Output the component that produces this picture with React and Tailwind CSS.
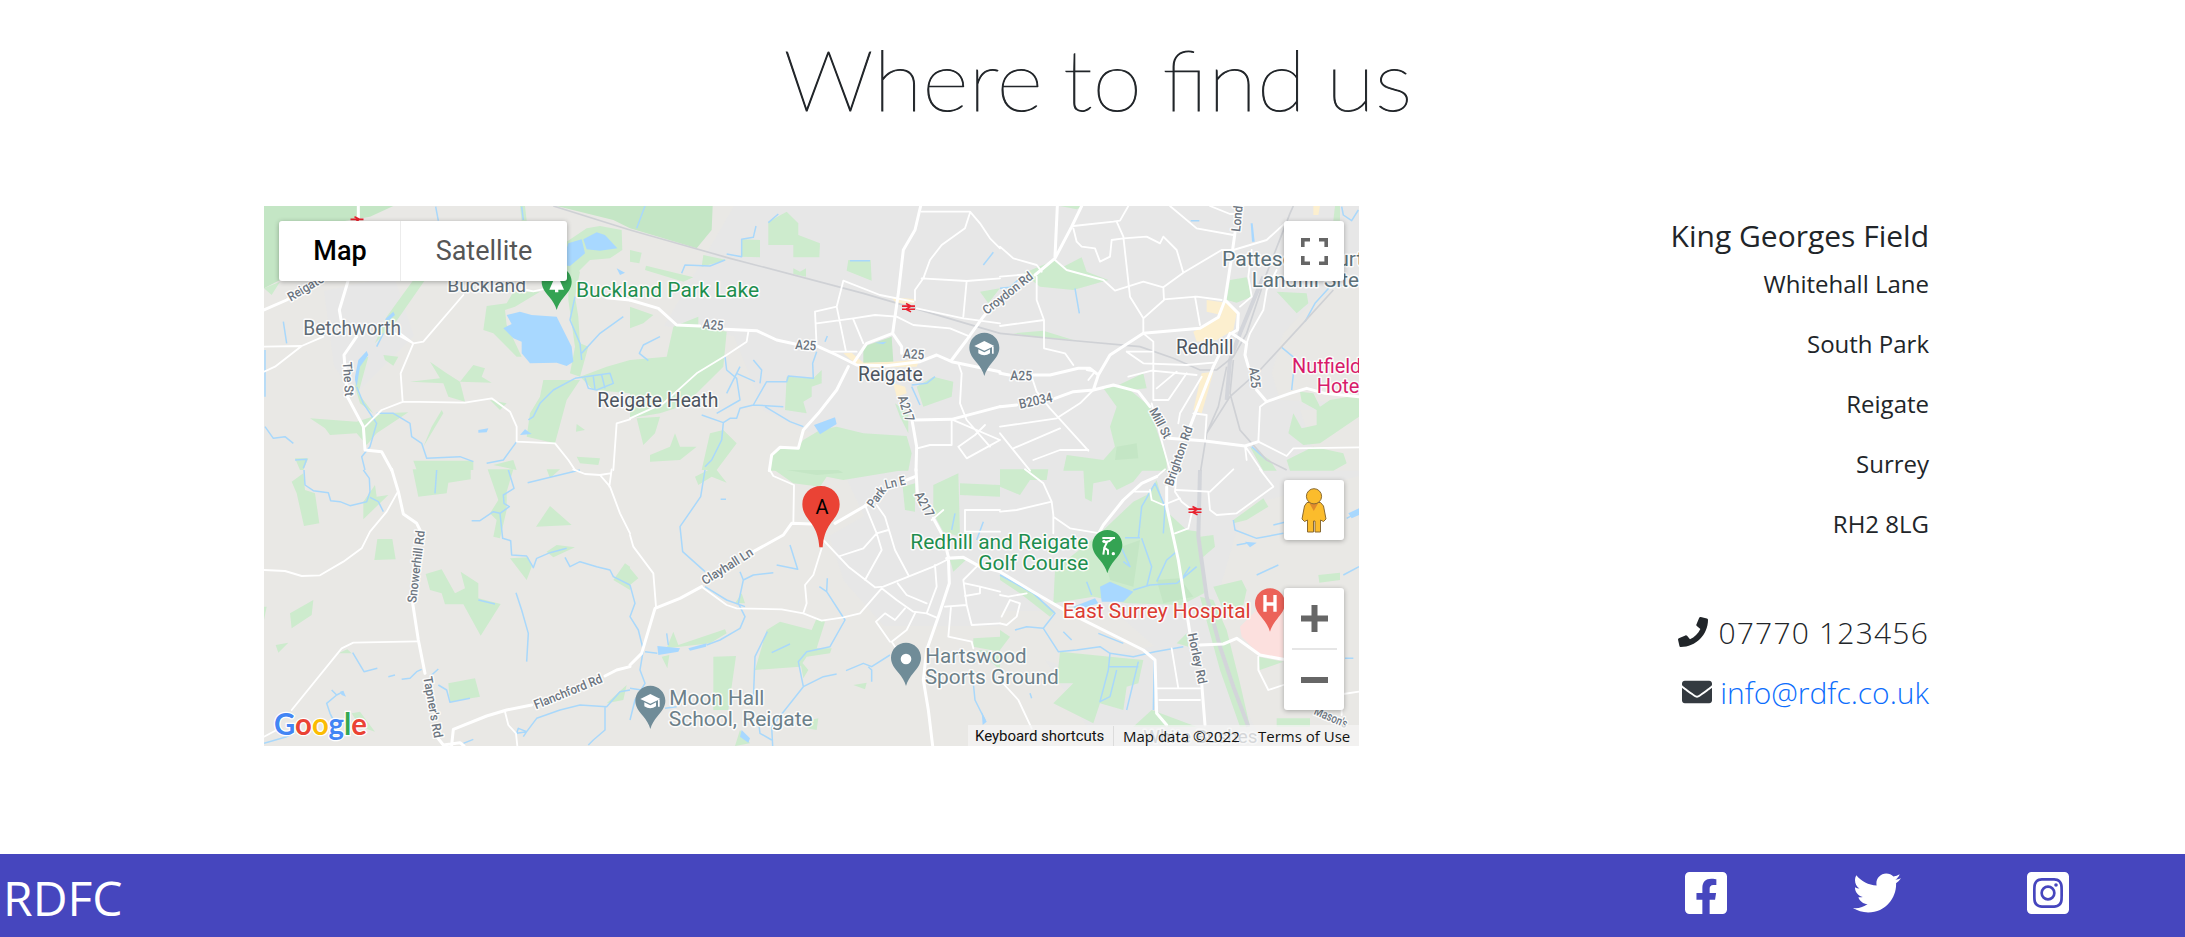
import React from "react";
import { FaFacebookSquare, FaTwitter, FaInstagramSquare, FaPhone, FaEnvelope } from "react-icons/fa";

// The map is described in six tiles; each tile uses its own 3x coordinate space.
const TILES = [
  {
    x: -4, y: -6,
    dark: "M12 18H400L330 50 250 64 60 240 12 265ZM890 18H1110V85L1060 60Z",
    green: "M12 265L60 245 35 285ZM920 125L980 85 1020 78 1085 90 1087 150 1050 175 990 180 930 240 880 240ZM925 200L960 215 945 290 955 350 960 430 985 440 960 530 930 520 945 440 925 300ZM680 318L740 310 760 275 840 275 765 320 735 330 740 375 785 470 770 470 700 400 670 390ZM460 240L495 240 410 362 345 430 380 350ZM370 465L415 470 400 497 375 480ZM510 485L560 520 600 545 640 495 675 505 665 530 695 548 600 545 615 605 565 590 550 550 450 545 540 535ZM850 540L960 540 920 600 885 730 800 710 810 640 840 590ZM960 530L1040 500 1110 480V580L1000 570ZM150 655L290 665 370 640 445 637 350 700 320 735 290 700 210 705 195 685ZM545 630L550 640 490 740 515 680ZM950 672L975 690 948 695ZM950 770L1020 775 1015 795 960 790ZM105 775L145 775 130 810 120 810ZM690 600L740 610 720 630ZM460 782H640V810H470ZM700 795L760 780 770 810ZM300 480L325 470 295 580 340 640 300 610 285 560ZM780 18H795L800 62H785Z",
    water: "M925 130L965 118 975 160 930 198 905 195ZM970 118L1010 97 1035 105 1072 145 1020 152 980 148ZM740 345L780 335 815 345 890 350 935 440 940 485 920 498 890 488 810 490 785 460 785 425 760 415 730 385 755 372ZM780 705L795 688 815 702ZM655 690L685 685 680 697 655 698ZM285 530L295 480 320 453 325 465 300 500 290 560 285 540ZM375 358L400 335 405 345 385 362ZM1070 205L1095 218 1080 225Z",
    stream: "M290 560L310 610 350 670 330 740 305 770 315 810M350 640L400 640 450 670 455 710 485 730 500 775 600 770 640 785M15 680L40 715 75 710 100 730M370 400L350 440M945 290L930 360 960 430 965 480M965 460L1020 400 1090 350M945 535L880 570 840 610 820 650 805 660M70 365L80 430M15 450V590M945 535L1050 520 1060 550 1010 570 985 565 975 535M1000 530L1005 568M1025 525L1035 565M770 725L730 780 680 790M105 780L140 778 130 805M527 20L535 62M785 20L790 60",
    rail: "M880 18L1110 90",
    minor: "M12 440L125 438 190 410M12 515L45 500 125 438M420 400L460 430 490 425 610 285M460 430L422 520 428 605M315 680L365 630 430 605 615 608 695 595 750 635 770 680 770 725 885 730 925 780 945 810M1060 810L1070 670 1110 658M800 270L820 274 860 265M405 400L460 430",
    major: "M12 330L80 300 180 240M265 240L238 330 245 370M290 410L252 465 262 590 310 680 315 750 365 755 395 810M295 18V62M1040 293L1110 300",
  },
  {
    x: 366, y: -6,
    dark: "M0 18H248L245 90 200 145 0 85ZM700 440L785 410 790 485 700 490Z",
    green: "M0 150L35 158 28 190 0 185ZM48 197L190 232 160 245 45 210ZM220 165L290 180 215 200ZM415 65L470 35 505 70 505 105 570 130 568 172 490 172 490 135 415 135ZM335 118L390 120 390 172 335 170ZM655 180H722L725 242 650 212ZM490 205L510 215 528 205 528 230 490 222ZM0 320L70 345 40 370 0 385ZM130 380L205 350 205 380 290 395 280 500 200 580 150 620 90 640 0 655V480L110 470ZM20 655L90 650 75 700 40 735ZM60 765L120 740 135 700 150 740 200 740 150 780 60 785ZM240 700L280 690 320 730 260 810 215 810ZM470 530L550 535 575 510 575 550 545 560 545 590 520 605 530 640 465 630ZM860 560L910 530 970 545 965 590 880 620ZM570 690L620 680 700 700 830 708 845 760 835 812 415 812 425 770 450 745 500 745 520 720ZM795 610L835 640 835 700 810 650ZM1050 275L1110 265 1075 310Z",
    yellow: "M640 460L665 458 700 488 790 485 870 478 860 500 690 503ZM785 292L850 297 855 310 800 312ZM790 550L825 560 830 580 800 590Z",
    water: "M552 675L615 652 620 672 570 703ZM735 428L770 425 760 433Z",
    stream: "M45 18L20 85M445 42L415 68M290 162L335 170V118L370 112 378 78M155 220L165 195 240 198 285 180M660 182H720M90 410L40 435 28 460 55 482M285 470L290 510 320 535 330 600 260 640M290 580L330 500M320 520L375 545M370 480L395 510 390 550M370 615L410 545 470 545 475 528 550 535 548 490 560 455M215 645L280 668 300 655 320 655 330 625 370 615 460 620M405 620L480 665 520 680M280 668L275 720 245 780 225 800M585 425L592 408M845 560L870 615M845 555L890 550 915 530M1060 195L1090 157",
    rail: "M0 90L300 175 700 280 1110 400",
    minor: "M0 655L100 610 200 520 290 465 350 425 355 395M875 35H1020L1050 70 1080 115 1110 145M1020 38L1005 85 935 135 900 180 880 235 855 270 855 300M875 235L1010 243 1110 235M1010 243L1000 350M640 242L750 285 850 305M640 242L620 320 555 335 560 440M620 320L648 455M560 370L670 355 735 345 800 350 850 375 960 385 1020 410M670 358L700 430M860 325L1000 355 1110 370M985 490L995 520 990 610 1010 660 1080 740M965 660V735H900L862 745M985 740L1035 705 1065 675M985 740L1010 775 1070 742 1110 720M965 658L1110 720M600 455H680",
    major: "M0 300L85 325 140 375 210 378M285 388L380 392 440 420 495 432M565 440L620 465 680 495 770 497 870 485 920 465 965 485 1110 515M872 18L855 90 820 150 805 280 788 400M670 490L710 430 788 400 815 440 815 460M845 655L860 740 858 812M855 660L965 658 1110 620M655 500L620 570 565 640 520 690 505 745 450 742 425 765 418 812M1110 290L1060 350 1010 420 965 480",
  },
  {
    x: 736, y: -6,
    rural: "M1077 230L950 290 850 400 815 520 840 600 1077 610ZM900 630H1077V812H960Z",
    green: "M70 220L165 180 190 200 245 172 260 215 325 240 220 270 120 260ZM180 18H250L230 28ZM690 240L740 232 755 290 710 308 680 300ZM830 275L920 280 925 310 890 340ZM40 400L130 392 220 420 100 410ZM310 565L345 560 430 520 440 565 390 570 450 620 470 690 500 780V812H190L200 765 310 780 345 740 330 680 350 620ZM900 575L940 580 960 620 990 600 1077 585V650L960 730 910 735 865 700 880 640 905 685 950 675 950 630 905 605ZM860 780L940 740 1030 760 1040 790 1000 812H870ZM750 740L810 780 830 812H790ZM1005 18H1020V62H1000Z",
    dark: "M350 740L410 730 415 775 345 780Z",
    yellow: "M620 300L690 310 710 340 700 390 650 420 590 425 580 395 640 360 665 345 620 335ZM605 520L640 515 625 570 605 640 580 630ZM940 18H960L955 45H940Z",
    water: "M752 70H758L764 125H756Z",
    stream: "M0 265L30 262 65 230M225 265L238 340M572 62H598M1025 20L1030 45 1055 62 1075 30M1077 250L990 260 945 310 915 365M845 442L885 475 875 570M755 740L800 780",
    railwide: "M790 230L720 400 690 480 680 600",
    rail: "M0 400L200 420 420 440 520 475 600 510 650 510 700 470 740 400 800 220 870 40 880 18M700 480L690 580 720 690 800 780 860 810M680 500L655 620 620 700 602 812M1000 270L900 380 780 510 690 590 620 700",
    minor: "M0 140L40 175 110 195 125 215M0 230L90 222M110 230V300L132 360V445L195 460 220 495M0 378L132 360M165 180L200 210 310 240 345 272 430 245 490 262 550 218 665 150 700 150M220 78L340 65 360 62 385 18M220 85L230 125 245 140 285 145 300 185 330 170 335 120 370 115 440 110 480 130 490 110 530 150 550 218M350 65L370 110 390 290 430 355V400M490 262L492 300 430 355M492 298L590 290 665 300M585 290L600 375M510 18L590 85 700 105M630 18L690 42H715M700 150L800 120 860 65M755 150L745 230 755 290 720 320M830 210L800 270 790 330 750 400 740 430M430 400L460 425V600L505 600 560 520M380 455H460M380 455L430 490 560 495 640 488M385 530L455 512 590 525M470 565L530 515M535 670L540 640 605 530M95 530L110 575 150 625 265 752M280 570L240 610 170 655 0 680M0 700L90 812M40 745L180 685M100 780L180 750 265 750M260 510L285 515 265 540M455 610L490 740 510 812M580 640L620 645 615 720M775 725L780 620 800 605M775 725L860 768 880 745 1077 742M735 738L785 812M735 738L740 780",
    major: "M172 18L165 170M245 18L215 80 165 175 105 225M0 520L28 525M100 525L150 525 235 505 270 505 295 525M280 570L295 525 330 465 430 400 600 385 655 352 675 300 695 170 705 98M675 300L715 340 712 390 695 400 740 430 735 465 745 500M770 570L800 605 870 580 920 565 975 580 1077 590M690 400L640 500 570 680M0 620L50 615M165 595L220 575 280 570 340 555 415 575 450 620M505 715L610 722 735 738 775 725",
  },
  {
    x: -4, y: 264,
    green: "M95 35L130 10 135 60 165 70 178 160 132 168 110 70ZM458 -2H632V28L565 38 560 70 475 80ZM683 -2H760L740 65 740 120 720 205 700 200 710 150 690 130 715 90ZM860 -2H900L870 25ZM828 170L870 108 935 165ZM310 95L345 45 350 80 385 75 310 148ZM352 207H397L407 268 343 270ZM497 312L545 298 585 370 615 355 602 305 655 340 655 385 722 402 662 497 610 403 555 403 545 370 510 360ZM90 430L160 390 155 435 95 475ZM47 525L85 518 55 548ZM235 550L262 538 275 550ZM565 640L645 625 660 680 570 695ZM750 265L805 262 815 290 800 330ZM860 245L890 225 945 232 880 262ZM1060 330L1095 280 1110 290V360ZM1040 700L1100 645 1090 690ZM12 410H20L12 450ZM275 730L300 725 345 785 300 770Z",
    water: "M240 665L250 662 258 680 245 675Z",
    stream: "M132 0L135 45 160 62 205 68 212 92 240 95 270 107 320 95 330 65 328 25 310 0M330 82L355 95 370 125M530 0L525 70M803 38L960 0M745 0L762 55 730 75 732 100 748 110 720 130 700 125 660 152 635 152M720 130L728 205 752 212 755 255 800 258 820 293 830 265 870 248 920 235M915 262L930 290 960 275 1010 290 1050 300 1060 320 1110 345M768 368L785 420 805 490 800 575M655 390L705 402M278 548L312 605 352 595M385 620L405 615M425 628L450 625 470 605 485 598M535 597L515 615M535 645L560 660 570 697 630 685M215 660L230 675 200 700 210 730 225 760M230 675L250 665M1110 660L1080 665 1040 710 960 705 900 720 830 745 800 785 770 790 775 775 800 785 790 800M1035 708V780L1000 810 985 825M12 820L80 800 100 790M610 820L640 808",
    minor: "M412 68L380 125 330 185 305 235 250 275 180 316 125 318 75 303 12 300M472 514L280 518 245 535 95 720M12 800L50 780M735 725L745 765 768 790 772 828M940 -2L975 12 1020 15 1050 10M1020 15L1050 50 1080 130 1110 190M1055 -2L1048 50",
    major: "M395 -2L415 65 430 132 470 160 480 180M458 400L475 510 495 610M530 800L550 825M575 825L580 778 680 738 740 720 815 705M1035 618L1070 600 1110 590M550 825L600 818 612 828",
  },
  {
    x: 366, y: 264,
    green: "M430 -2H835L640 30 590 20 570 50 490 40ZM195 20L235 0 260 0 290 38 245 20 205 45ZM910 45L985 10 990 200 940 185 910 130ZM990 40L1110 45V80L990 75ZM818 50L855 40V125L825 120ZM0 295L25 325 0 345ZM315 400L335 370 345 400ZM960 270L1010 268 970 305ZM375 600L410 480 450 455 545 480 560 445 585 455 560 535 605 535 600 550 530 560 510 590ZM510 570L535 600 520 625ZM250 560L318 558 295 720 250 720ZM110 535L130 485 145 525 285 478 290 490 240 520 150 530ZM95 560L118 555 112 595ZM1030 505L1110 500V545L1030 530ZM670 645L710 638 705 658ZM540 750L565 745 560 780 530 775ZM315 828L330 780 360 820ZM1045 540L1110 545V600Z",
    dark: "M470 0H625L640 8 560 15Z",
    water: "M82 528L150 535 145 545 85 555ZM175 535L230 520 228 530 180 542ZM335 780L360 805 355 818 330 800ZM1055 725L1070 755 1058 765Z",
    stream: "M225 0L212 80 150 170 158 245 225 305M225 350L290 390 345 410M430 308L370 315 340 330 325 400 345 440 330 475 270 510 230 525M45 545L82 550M440 285L503 298 480 225M568 350L590 365 645 450 600 530 530 545 505 575 520 650 425 770 428 828M590 365L592 325M412 485L375 560 370 690M425 548L480 522M520 650L580 620 620 612M648 602L700 580 725 590 780 555M715 590L725 600V635M0 345L15 400 0 440 25 480 40 540 30 600 45 640 15 690 0 750M0 655L35 660M1030 640L1035 690 1065 750M272 88H288M1040 210L1060 155M965 180L975 130M385 750L390 790 425 810M110 490L115 525M105 715L140 710M340 330L330 305",
    minor: "M0 195L10 230 70 310 78 410M418 -2L430 18 492 45 490 160M215 350L290 405 320 415 455 418 520 430 575 452 640 442 690 430 755 355M735 352L760 350 910 290 950 270M575 235L550 315 525 345 530 400 520 430M580 210L655 290 735 352M705 105L740 190 755 240 705 330M630 258L700 235 740 190 775 180M740 105L765 140 795 240 835 315M915 285L920 350 890 430 850 425 800 390 755 355M803 340L830 375 890 400M890 430L920 443M825 415L795 450 765 430 738 455 780 515M855 430L830 480 785 515 795 530M945 410L1010 405 1000 330 1040 290M963 410L955 500 1025 515 1030 535M1010 405L1025 465 1110 460M1005 340L1050 350 1050 370 1005 378M1050 350L1110 365M1110 120H1005V185H1110M905 150L940 120",
    major: "M0 585L35 550 75 415 150 385 215 350M370 245L460 195 485 160 545 162M615 160L710 105M830 30L855 20M858 -2L862 70M910 145L940 200 955 260 958 340 925 440 890 540 880 630 895 720 908 828M950 265L1000 262 1050 290 1110 305",
  },
  {
    x: 736, y: 264,
    green: "M0 -2H145L140 30 90 30 60 75 0 50ZM250 -2H430L400 35 350 60 330 30 280 40 275 95 255 85ZM160 400L165 300 200 270 300 190 400 95 440 75 470 30 495 120 560 180 600 185 612 370 545 405 380 400 280 380ZM600 200L640 195 645 230 605 265ZM640 350L725 330 740 360 730 405 670 420ZM600 380L640 390 680 480 720 640 750 770 720 770 660 600ZM700 150L790 85 805 110 740 150 700 160ZM955 315L1020 308V330L958 338ZM0 315L80 355 165 425 150 440 60 370 0 330ZM180 545L330 560 430 570 415 640 380 650 370 720 300 700 280 760 160 700 220 640 170 640ZM455 720L590 770H400ZM0 480L30 500 0 540ZM530 520L560 490 565 530ZM775 560L850 575 780 600ZM830 745H930V770H830Z",
    dark: "M310 250L420 210 400 350 330 330ZM470 330L540 325 580 380 490 400Z",
    pink: "M720 470L770 420 850 410V570L780 555 725 500Z",
    water: "M300 350L330 335 400 365 370 395 305 395ZM220 410L285 385 295 400 230 420ZM735 215L770 218 750 232ZM1045 130L1077 115V135L1055 145Z",
    stream: "M375 203H420M415 205L425 110 465 40 495 110 490 190M425 205L455 290 440 350M260 335L275 375M365 235L390 290 370 275M400 360L450 345 530 340 590 290M470 335L500 270 530 245M550 320L570 290M0 315L100 370 165 430 130 475 175 545 230 540 300 530 330 550 400 560 465 545 550 530M45 480L80 470 130 475M295 490L370 520M330 550L325 600 300 695 330 680 350 600M415 575L380 720M325 590L415 590M463 570L460 720M700 150L705 180 770 205 850 190M820 165L860 155M710 225L740 220M770 315L835 285M1030 315L1077 290M190 485L215 510M90 670L95 685M1035 565H1060M1040 145L1077 125",
    railwide: "M600 0L595 200 620 380 660 530 700 650 745 770",
    minor: "M0 125L50 120 155 95M75 -2L130 40 155 95 160 135V190M160 140L210 175 300 190M450 60L455 90 490 105 540 85M405 65H450M530 10L525 65 545 95 570 115M530 60L625 65 630 120 650 135 710 130 820 50 780 -2M630 65L700 -2M575 130L565 175 525 190M0 375L25 380 80 370M0 460L20 465 50 440 60 400 30 390 5 440M515 535L535 655M470 655H600M478 690H600M775 560V600L805 660 850 645M1030 672L1077 665M0 630L55 690 95 775M1025 672V735M470 20L495 -2",
    major: "M470 20L425 40 370 90 310 165 290 200M500 50L500 110 535 270 570 490M605 640L615 765M0 305L90 360 210 430 430 540 465 570 470 730 500 765M600 525L670 522 710 505 780 555 850 568",
  },
];

const SLATE = "#5b7078";
const TOWN = "#4d5560";
const ROAD = "#6c7580";

// tile, x, y, text, length, size, colour, rotation
const LABELS = [
  [0, 130, 405, "Betchworth", 293, 58, "#5f6b75", 0],
  [0, 562, 275, "Buckland", 236, 56, "#5f6b75", 0],
  [0, 92, 305, "Reigate Rd", 170, 38, ROAD, -31],
  [0, 248, 487, "The St", 103, 38, ROAD, 86],
  [0, 948, 290, "Buckland Park Lake", 549, 62, "#1e8e4e", 0],
  [0, 1012, 620, "Reigate Heath", 363, 58, TOWN, 0],
  [1, 217, 385, "A25", 62, 40, ROAD, 6],
  [1, 495, 447, "A25", 63, 40, ROAD, 4],
  [1, 818, 474, "A25", 64, 40, ROAD, 4],
  [1, 684, 543, "Reigate", 194, 58, TOWN, 0],
  [1, 803, 592, "A217", 80, 40, ROAD, 72],
  [1, 1070, 345, "Croydon Rd", 180, 38, ROAD, -38],
  [2, 720, 96, "London Rd", 168, 38, ROAD, -84],
  [2, 666, 197, "Patteson Court", 424, 60, SLATE, 0],
  [2, 755, 260, "Landfill Site", 322, 60, SLATE, 0],
  [2, 528, 462, "Redhill", 172, 60, TOWN, 0],
  [2, 876, 518, "Nutfield", 208, 62, "#d81b6a", 0],
  [2, 950, 580, "Hotel", 143, 62, "#d81b6a", 0],
  [2, 31, 540, "A25", 65, 40, ROAD, 1],
  [2, 60, 626, "B2034", 102, 40, ROAD, -12],
  [2, 447, 632, "Mill St", 98, 38, ROAD, 62],
  [2, 518, 860, "Brighton Rd", 186, 38, ROAD, -71],
  [2, 748, 504, "A25", 62, 40, ROAD, 84],
  [3, 468, 400, "Snowerhill Rd", 218, 38, ROAD, -83],
  [3, 490, 622, "Tapner's Rd", 186, 38, ROAD, 80],
  [3, 828, 718, "Flanchford Rd", 218, 38, ROAD, -22],
  [4, 225, 346, "Clayhall Ln", 174, 38, ROAD, -32],
  [4, 730, 116, "Park", 68, 38, ROAD, -54],
  [4, 768, 57, "Ln E", 62, 38, ROAD, -13],
  [4, 853, 74, "A217", 80, 40, ROAD, 62],
  [4, 841, 237, "Redhill and Reigate", 534, 62, "#1e8e4e", 0],
  [4, 1045, 300, "Golf Course", 330, 62, "#1e8e4e", 0],
  [4, 118, 705, "Moon Hall", 285, 62, "#6c8089", 0],
  [4, 116, 768, "School, Reigate", 432, 62, "#6c8089", 0],
  [4, 886, 578, "Hartswood", 304, 62, "#6c8089", 0],
  [4, 884, 641, "Sports Ground", 402, 62, "#6c8089", 0],
  [5, 188, 444, "East Surrey Hospital", 564, 62, "#dc3c32", 0],
  [5, 563, 492, "Horley Rd", 155, 38, ROAD, 78],
  [5, 940, 732, "Mason's", 105, 38, ROAD, 24],
  [5, 430, 820, "White Bushes", 342, 56, "#8a8f96", 0],
];

const Layer = ({ k, ...p }) =>
  TILES.map((t, i) => (t[k] ? <path key={i} d={t[k]} transform={`translate(${t.x} ${t.y}) scale(.33333)`} {...p} /> : null));

const PIN = "M0-45C-25-45-45-25-45 0C-45 18-34 32-22 46C-12 58-4 70 0 85C4 70 12 58 22 46C34 32 45 18 45 0C45-25 25-45 0-45Z";

function Pin({ tile, x, y, fill, children }) {
  const t = TILES[tile];
  return (
    <g transform={`translate(${t.x + x / 3} ${t.y + y / 3}) scale(.33333)`}>
      <path d={PIN} fill={fill} />
      {children}
    </g>
  );
}

const Cap = () => (
  <>
    <path d="M-30-5L0-20 30-5 0 9Z" fill="#fff" />
    <path d="M-18 5V17Q0 29 17 17V5L0 14ZM23-2H28V18H23Z" fill="#fff" />
  </>
);

const Rail = ({ x, y }) => (
  <g transform={`translate(${x} ${y})`} stroke="#e8212e" fill="none" strokeWidth="1.6">
    <path d="M-6.5-1.6H6.5M-6.5 1.6H6.5M-2.5-4.2L2.5-1.6-2.5 1.6 2.5 4.2" />
  </g>
);

function MapCanvas() {
  return (
    <svg className="block h-full w-full" viewBox="0 0 1095 540" fontFamily="Roboto, sans-serif">
      <rect width="1095" height="540" fill="#e9e8e5" />
      <path
        d="M470 0H1095V540H835L760 420 620 420 580 375 565 330 600 310 565 235 500 205 470 130 400 120ZM60 85L130 70 150 130 90 190 70 160Z"
        fill="#e7e7e7"
      />
      <path d="M980 300L1095 270V540H1000L960 460 945 420ZM736 405L850 405 890 440 800 460 736 440Z" fill="#e9e8e5" />
      <path d="M890 440H950V540H900Z" fill="#e7e7e7" />
      <Layer k="rural" fill="#e9e8e5" />
      <Layer k="green" fill="#cdebcd" />
      <Layer k="dark" fill="#c4e6c5" />
      <Layer k="yellow" fill="#fcefcf" />
      <Layer k="pink" fill="#fce0de" />
      <Layer k="water" fill="#a8d8ff" />
      <Layer k="stream" fill="none" stroke="#a9d8fb" strokeWidth="4.5" strokeLinejoin="round" />
      <Layer k="railwide" fill="none" stroke="#d3d5da" strokeWidth="12" />
      <Layer k="rail" fill="none" stroke="#cfd1d5" strokeWidth="5" />
      <Layer k="minor" fill="none" stroke="#fff" strokeWidth="5.5" strokeLinejoin="round" strokeLinecap="round" />
      <Layer k="major" fill="none" stroke="#fff" strokeWidth="9" strokeLinejoin="round" strokeLinecap="round" />
      <Rail x={644.5} y={101.7} />
      <Rail x={931} y={304.7} />
      <Rail x={93} y={15} />
      {LABELS.map(([t, x, y, text, len, size, fill, rot]) => (
        <text
          key={text + x}
          transform={`translate(${TILES[t].x + x / 3} ${TILES[t].y + y / 3}) rotate(${rot})`}
          fontSize={size / 3}
          fontWeight={size > 45 ? 400 : 500}
          textLength={len / 3}
          lengthAdjust="spacingAndGlyphs"
          fill={fill}
          stroke="#fff"
          strokeOpacity=".85"
          strokeWidth="3"
          strokeLinejoin="round"
          paintOrder="stroke"
        >
          {text}
        </text>
      ))}
      <Pin tile={0} x={890} y={245} fill="#34a353"><path d="M0-25L22 24H5V32H-5V24H-22Z" fill="#fff" /></Pin>
      <Pin tile={1} x={1063} y={443} fill="#708c98"><Cap /></Pin>
      <Pin tile={4} x={61} y={692} fill="#708c98"><Cap /></Pin>
      <Pin tile={4} x={828} y={563} fill="#708c98"><circle cy="4" r="16" fill="#fff" /></Pin>
      <Pin tile={5} x={322} y={225} fill="#34a353">
        <path d="M-15-21H23M0-10L-9 8 2 16V29M-9 8L-12 29M-9-8L6-12 16-20" stroke="#fff" strokeWidth="6" fill="none" />
        <circle cx="-10" cy="-11" r="5" fill="#fff" />
        <circle cx="18" cy="26" r="5" fill="#fff" />
      </Pin>
      <Pin tile={5} x={810} y={400} fill="#ec6259"><path d="M-15-25V25M15-25V25M-15 2H15" stroke="#fff" strokeWidth="10" /></Pin>
      <g transform="translate(557 298.3) scale(.33333)">
        <path d="M0-55C-32-55-56-31-56 0C-56 24-42 40-28 58C-14 78-7 100-5 129H5C7 100 14 78 28 58C42 40 56 24 56 0C56-31 32-55 0-55Z" fill="#ea4335" />
        <text x="3" y="30" fontSize="60" textAnchor="middle" fill="#000">A</text>
      </g>
      <text x="10" y="528.500" fontFamily="Lato, sans-serif" fontWeight="700" fontSize="30" textLength="93" lengthAdjust="spacingAndGlyphs" stroke="#fff" strokeWidth="2.5" paintOrder="stroke">
        <tspan fill="#4285f4">G</tspan><tspan fill="#ea4335">o</tspan><tspan fill="#fbbc04">o</tspan><tspan fill="#4285f4">g</tspan><tspan fill="#34a853">l</tspan><tspan fill="#ea4335">e</tspan>
      </text>
    </svg>
  );
}

const button = "absolute bg-white rounded-[3px] shadow-[0_1px_5px_rgba(0,0,0,0.3)]";

function MapPanel() {
  return (
    <div className="relative h-[540px] w-[1095px] shrink-0 overflow-hidden font-[Roboto,sans-serif]">
      <MapCanvas />
      <div className={`${button} left-[15px] top-[15px] flex h-[60px] w-[288px] items-center text-[27px] leading-none`}>
        <div className="flex h-full w-[122px] items-center justify-center border-r border-[#ececec] pl-px font-medium text-black">Map</div>
        <div className="flex h-full flex-1 items-center justify-center text-[#565656]">Satellite</div>
      </div>
      <div className={`${button} right-[15px] top-[15px] flex h-[60px] w-[60px] items-center justify-center`}>
        <svg width="27" height="27" viewBox="0 0 27 27" fill="none" stroke="#666" strokeWidth="3.6">
          <path d="M1.800 9V1.800H9M18 1.800H25.200V9M25.200 18V25.200H18M9 25.200H1.800V18" />
        </svg>
      </div>
      <div className={`${button} right-[15px] top-[274px] flex h-[60px] w-[60px] items-center justify-center`}>
        <svg width="26" height="45" viewBox="0 0 26 45" fill="#fbbc2c" stroke="#8a6a30" strokeWidth="1">
          <path d="M6 14.500L3.500 18 1 31 3.500 33.500 6.500 32V44H12.500V33H14V44H19.500V32L22.500 33.500 25 31 22.500 18 19.500 14.500Z" />
          <path d="M8 14.500L12.800 23 17.500 14.500Z" fill="#e08a2c" stroke="none" />
          <circle cx="13" cy="8.300" r="7.600" />
        </svg>
      </div>
      <div className={`${button} right-[15px] top-[382px] flex h-[122px] w-[60px] flex-col items-center`}>
        <div className="flex h-[60px] items-center">
          <svg width="27" height="27" viewBox="0 0 27 27" fill="#666"><path d="M10.500 0h6v10.500H27v6H16.500V27h-6V16.500H0v-6h10.500z" /></svg>
        </div>
        <div className="h-[2px] w-[45px] bg-[#e6e6e6]" />
        <div className="flex h-[60px] items-center"><div className="h-[6px] w-[27px] bg-[#666]" /></div>
      </div>
      <div className="absolute bottom-0 right-0 flex h-[21px] w-[391px] items-center bg-[#f5f5f5]/70 pl-[7px] pt-px text-[15px] text-[#111]">
        <span className="w-[129px] whitespace-nowrap tracking-[-0.05px]">Keyboard shortcuts</span>
        <span className="ml-[9px] h-full w-px bg-[#dcdcdc]" />
        <span className="ml-[9px] w-[135px] whitespace-nowrap font-['Open_Sans',sans-serif]">Map data ©2022</span>
        <span className="whitespace-nowrap font-['Open_Sans',sans-serif]">Terms of Use</span>
      </div>
    </div>
  );
}

const ADDRESS = ["Whitehall Lane", "South Park", "Reigate", "Surrey", "RH2 8LG"];

export default function App() {
  return (
    <div className="flex h-[937px] w-[2185px] flex-col overflow-hidden bg-white font-['Open_Sans',sans-serif] text-[#212529]">
      <h2 className="flex h-[206px] justify-center pl-[10px] pt-[14px] font-[Lato,sans-serif] text-[84px] font-thin leading-[130px]">
        <span className="scale-x-[1.07] [word-spacing:-5px] [-webkit-text-stroke:0.9px_#212529]">Where to find us</span>
      </h2>
      <div className="flex h-[648px] justify-between pl-[264px] pr-[256px]">
        <MapPanel />
        <address className="flex flex-col items-end not-italic">
          <div className="mt-[12px] text-[30px] leading-[36px]">King Georges Field</div>
          {ADDRESS.map((line) => (
            <div key={line} className="h-[60px] text-[24px] leading-[60px]">{line}</div>
          ))}
          <div className="mt-[48px] flex h-[60px] items-center gap-[10px] text-[30px] font-light tracking-[1.2px]">
            <FaPhone className="size-[30px]" />
            <span>07770 123456</span>
          </div>
          <div className="flex h-[60px] items-center gap-[8px] text-[30px] font-light">
            <FaEnvelope className="size-[30px] text-[#343a40]" />
            <a className="text-[#0d6efd]">info@rdfc.co.uk</a>
          </div>
        </address>
      </div>
      <footer className="flex h-[83px] items-start justify-between bg-[#4646be] pr-[52px] text-white">
        <div className="pl-[3px] pt-[11px] text-[48px] leading-[66px]">RDFC</div>
        <nav className="grid w-[513px] grid-cols-3 justify-items-center pt-[15px] text-[48px]">
          <FaFacebookSquare />
          <FaTwitter />
          <FaInstagramSquare />
        </nav>
      </footer>
    </div>
  );
}
